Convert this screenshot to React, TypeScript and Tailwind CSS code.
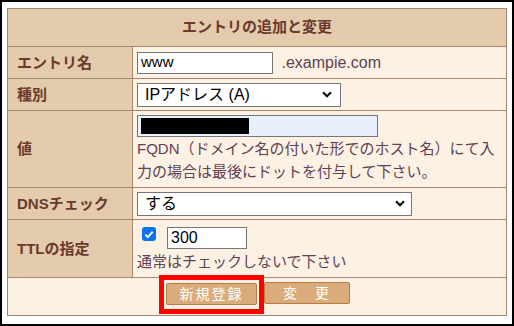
import React from 'react';

const labelCell =
  'w-[125px] shrink-0 border-r border-[#a7876b] bg-[#e3cbab] pl-[9px] flex items-center text-[15px] font-bold text-[#6b3a2e] leading-[20px]';

const Chevron: React.FC = () => (
  <svg width="10" height="7" viewBox="0 0 10 7">
    <path d="M1 1.3 L5 5.3 L9 1.3" fill="none" stroke="#111" strokeWidth="2.2" />
  </svg>
);

const SelectBox: React.FC<{ widthClass: string; value: string; padRight: string }> = ({
  widthClass,
  value,
  padRight,
}) => (
  <div
    className={`${widthClass} h-[24px] border border-[#767676] bg-white flex items-center justify-between pl-[7px] ${padRight} text-[16px] leading-[20px] text-black`}
  >
    <span>{value}</span>
    <Chevron />
  </div>
);

const Row: React.FC<{ label: string; heightClass: string; children: React.ReactNode }> = ({
  label,
  heightClass,
  children,
}) => (
  <div className={`flex ${heightClass} border-t border-[#a7876b]`}>
    <div className={labelCell}>{label}</div>
    <div className="flex-1 pl-[4px]">{children}</div>
  </div>
);

export default function App() {
  return (
    <div className="w-[514px] h-[326px] border-2 border-black bg-white pl-[5px] pt-[6px] font-['Liberation_Sans','Noto_Sans_CJK_JP',sans-serif]">
      <div className="w-[500px] border border-[#a7876b] bg-[#fdf1e3]">
        {/* Header */}
        <div className="h-[37px] bg-[#e3cbab] flex items-center justify-center text-[15px] font-bold text-[#6b3a2e]">
          エントリの追加と変更
        </div>

        <Row label="エントリ名" heightClass="h-[32px]">
          <div className="h-full flex items-center">
            <div className="w-[136px] h-[22px] border border-[#767676] bg-white flex items-center pl-[3px] text-[15px] text-black">
              www
            </div>
            <span className="ml-[4px] text-[16px] text-[#5e4254]">&nbsp;.exampie.com</span>
          </div>
        </Row>

        <Row label="種別" heightClass="h-[32px]">
          <div className="h-full flex items-center">
            <SelectBox widthClass="w-[204px]" value="IPアドレス (A)" padRight="pr-[8px]" />
          </div>
        </Row>

        <Row label="値" heightClass="h-[77px]">
          <div className="pt-[4px] flex flex-col">
            <div className="w-[241px] h-[22px] border border-[#767676] bg-[#e8f0fe] flex items-center pl-[3px]">
              <div className="w-[108px] h-[16px] bg-black" />
            </div>
            <p className="text-[15px] leading-[23px] text-[#5e4254]">
              FQDN（ドメイン名の付いた形でのホスト名）にて入
              <br />
              力の場合は最後にドットを付与して下さい。
            </p>
          </div>
        </Row>

        <Row label="DNSチェック" heightClass="h-[32px]">
          <div className="h-full flex items-center">
            <SelectBox widthClass="w-[275px]" value="する" padRight="pr-[6px]" />
          </div>
        </Row>

        <Row label="TTLの指定" heightClass="h-[58px]">
          <div className="pt-[7px] flex flex-col">
            <div className="flex items-start">
              <div className="ml-[5px] w-[14px] h-[14px] rounded-[3px] bg-[#0b73f0] flex items-center justify-center">
                <svg width="10" height="9" viewBox="0 0 10 9">
                  <path d="M1.3 4.6 L3.9 7.1 L8.7 1.6" fill="none" stroke="#fff" strokeWidth="2" />
                </svg>
              </div>
              <div className="ml-[11px] w-[80px] h-[22px] border border-[#767676] bg-white flex items-center pl-[3px] text-[16px] text-black">
                300
              </div>
            </div>
            <p className="mt-[1px] text-[15px] leading-[23px] text-[#5e4254]">
              通常はチェックしないで下さい
            </p>
          </div>
        </Row>

        {/* Buttons */}
        <div className="h-[38px] border-t border-[#a7876b] flex justify-center items-start gap-[7px] pt-[4px] pl-[2px]">
          <span className="relative">
            <button className="w-[91px] h-[22px] border border-[#b87d45] rounded-[2px] bg-[#dbac7b] text-[14px] leading-[20px] tracking-[2px] text-white">
              新規登録
            </button>
            <span className="absolute -left-[7px] -right-[7px] -top-[7px] -bottom-[8px] border-[5px] border-[#ff0000]" />
          </span>
          <button className="w-[86px] h-[22px] border border-[#b87d45] rounded-[2px] bg-[#dbac7b] text-[14px] leading-[20px] tracking-[2px] text-white">
            変　更
          </button>
        </div>
      </div>
    </div>
  );
}
